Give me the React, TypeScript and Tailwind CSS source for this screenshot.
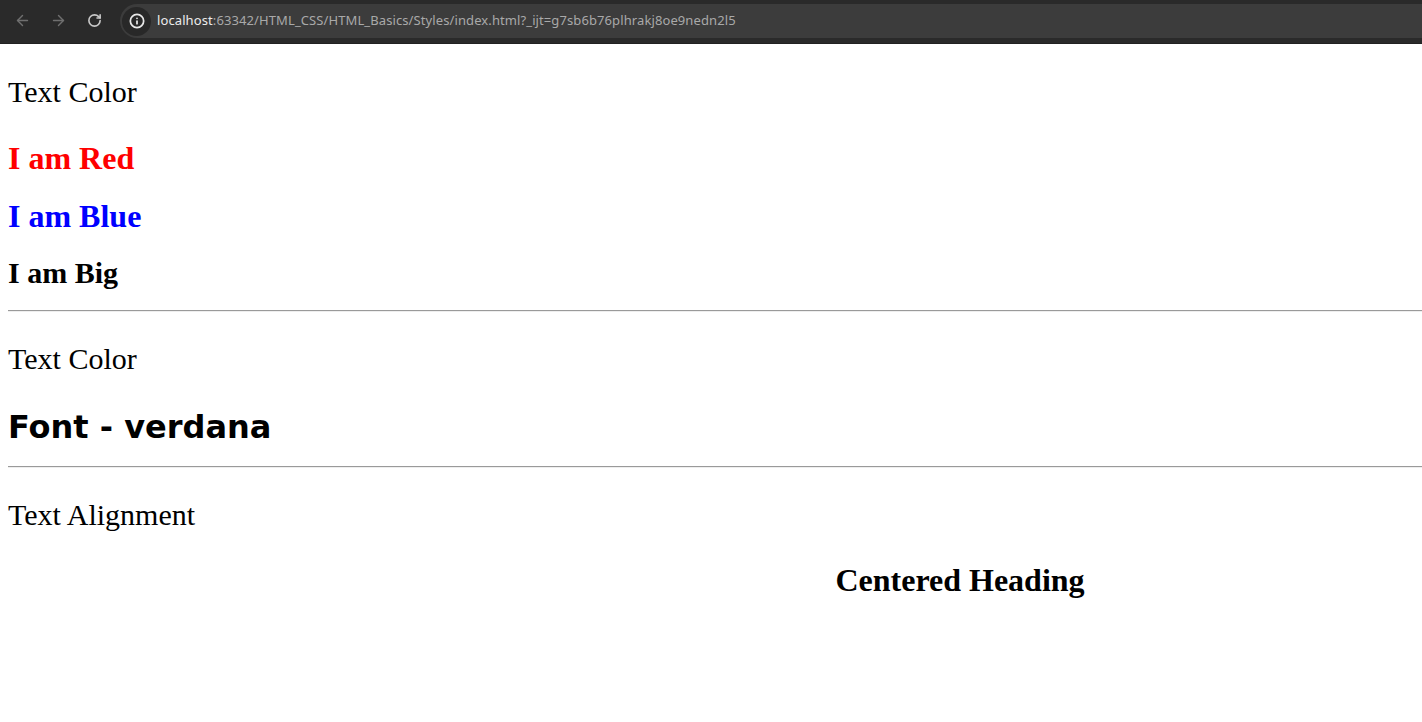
import React from "react";
import { ArrowLeft, ArrowRight, RotateCw, Info } from "lucide-react";

function BrowserBar() {
  return (
    <div className="flex h-[44px] items-start bg-[#2a2a2a] border-b border-[#222]">
      <div className="flex h-[41px] items-center">
        <div className="flex w-[44px] justify-center">
          <ArrowLeft size={17} strokeWidth={2} className="text-[#6f6f6f]" />
        </div>
        <div className="flex w-[28px] justify-center">
          <ArrowRight size={17} strokeWidth={2} className="text-[#6f6f6f]" />
        </div>
        <div className="flex w-[44px] justify-center">
          <RotateCw size={15} strokeWidth={2.6} className="text-[#c8c8c8]" />
        </div>
      </div>
      <div className="mt-[4px] ml-[4px] flex h-[34px] flex-1 items-center rounded-l-full bg-[#3c3c3c] pl-[2px]">
        <div className="flex h-[29px] w-[29px] items-center justify-center rounded-full bg-[#282828]">
          <Info size={16} strokeWidth={2.6} className="text-[#e8e8e8]" />
        </div>
        <span className="ml-[6px] text-[13px] tracking-[0.1px] font-['Noto_Sans',sans-serif] text-[#a9a9a9]">
          <span className="text-[#ececec]">localhost</span>
          :63342/HTML_CSS/HTML_Basics/Styles/index.html?_ijt=g7sb6b76plhrakj8oe9nedn2l5
        </span>
      </div>
    </div>
  );
}

function Rule({ mt }: { mt: string }) {
  return <div className={`${mt} ml-[8px] h-[2px] border-t border-[#9a9a9a] border-b border-b-[#eeeeee]`} />;
}

export default function App() {
  return (
    <div className="min-h-[722px] overflow-hidden bg-white font-['Liberation_Serif','Times_New_Roman',serif] text-black">
      <BrowserBar />
      <div className="flex flex-col">
        <p className="mt-[33px] ml-[8px] text-[30px] leading-none">Text Color</p>
        <h1 className="mt-[35px] ml-[8px] text-[32px] leading-none font-bold text-[#ff0000]">I am Red</h1>
        <h1 className="mt-[26px] ml-[8px] text-[32px] leading-none font-bold text-[#0000ff]">I am Blue</h1>
        <h1 className="mt-[26px] ml-[8px] text-[30px] leading-none font-bold">I am Big</h1>
        <Rule mt="mt-[22px]" />
        <p className="mt-[32px] ml-[8px] text-[30px] leading-none">Text Color</p>
        <h1 className="mt-[37px] ml-[8px] text-[32px] leading-none font-bold font-['DejaVu_Sans',Verdana,sans-serif]">
          Font - verdana
        </h1>
        <Rule mt="mt-[23px]" />
        <p className="mt-[32px] ml-[8px] text-[30px] leading-none">Text Alignment</p>
        <div className="mt-[34px] pl-[498px]">
          <h1 className="text-center text-[32px] leading-none font-bold">Centered Heading</h1>
        </div>
      </div>
    </div>
  );
}
